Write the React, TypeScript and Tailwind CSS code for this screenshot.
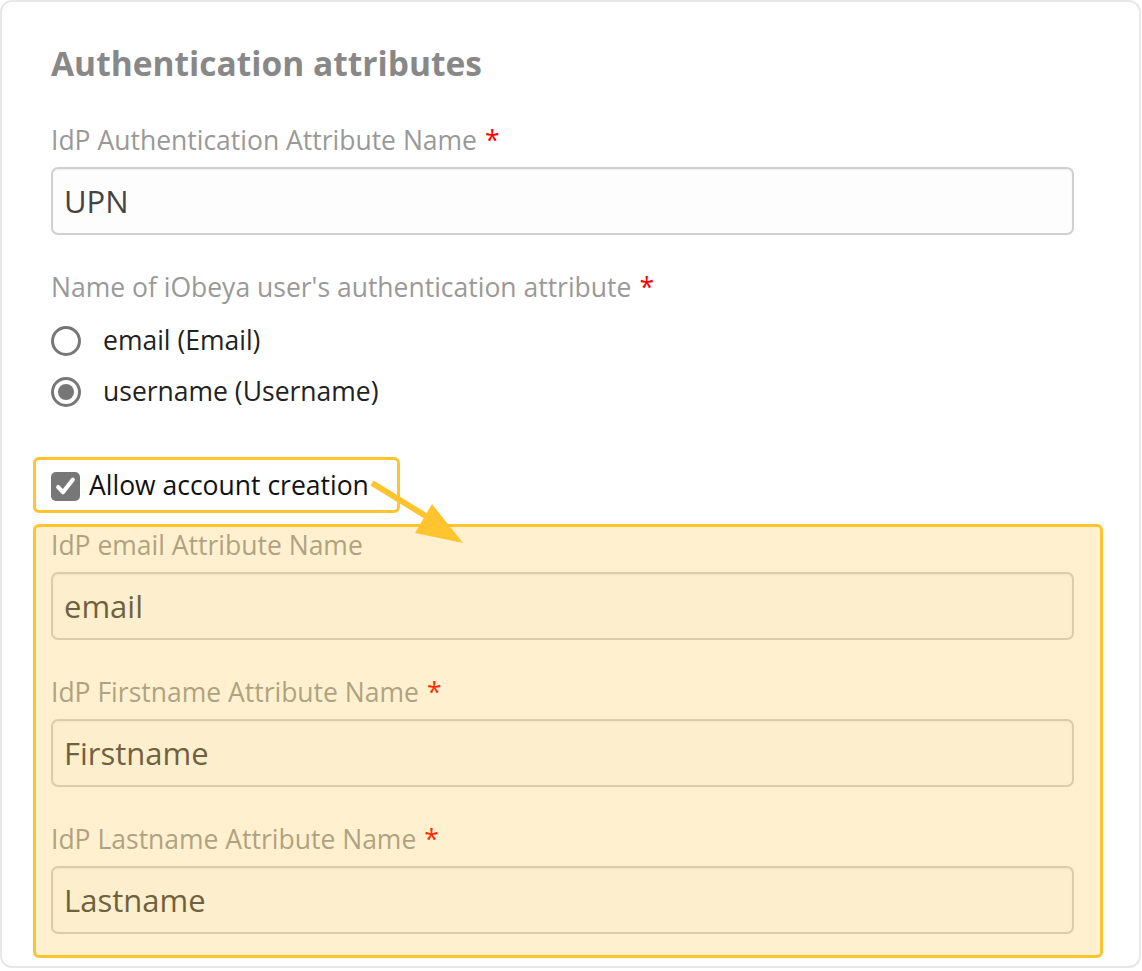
import React from 'react'

const font = { fontFamily: '"Open Sans", "Noto Sans", sans-serif' }

function Label({ text, required }: { text: string; required?: boolean }) {
  return (
    <div className="text-[26.5px] leading-[32px] text-[#999999]">
      {text}
      {required && <span className="ml-2 text-[#ff0000]">*</span>}
    </div>
  )
}

function TextField({ label, value, required }: { label: string; value: string; required?: boolean }) {
  return (
    <div className="flex flex-col">
      <Label text={label} required={required} />
      <div className="mt-[11px] flex h-[68px] items-center rounded-[7px] border-2 border-[#d0d0d0] bg-[#fdfdfd] px-[11px] text-[31px] text-[#444444] shadow-[inset_0_1px_2px_rgba(0,0,0,0.06)]">
        {value}
      </div>
    </div>
  )
}

function Radio({ label, checked }: { label: string; checked?: boolean }) {
  return (
    <div className="flex h-[32px] items-center gap-[22px]">
      <span className="flex h-[30px] w-[30px] items-center justify-center rounded-full border-[3px] border-[#777777] bg-white">
        {checked && <span className="h-[16px] w-[16px] rounded-full bg-[#777777]" />}
      </span>
      <span className="text-[26.5px] text-[#222222]">{label}</span>
    </div>
  )
}

export default function App() {
  return (
    <div className="bg-white" style={font}>
      <div className="relative h-[968px] w-[1141px] rounded-[12px] border-2 border-[#e8e8e8] bg-white pl-[49px] pr-[65px] pt-[41px]">
        <h2 className="text-[33.5px] font-bold leading-[40px] text-[#888888]">Authentication attributes</h2>

        <div className="mt-[41px]">
          <TextField label="IdP Authentication Attribute Name" value="UPN" required />
        </div>

        <div className="mt-[36px]">
          <Label text="Name of iObeya user's authentication attribute" required />
        </div>
        <div className="mt-[22px] flex flex-col gap-[19px]">
          <Radio label="email (Email)" />
          <Radio label="username (Username)" checked />
        </div>

        <div className="mt-[62px] flex h-[32px] items-center gap-[9px]">
          <span className="flex h-[29px] w-[29px] items-center justify-center rounded-[5px] bg-[#777777]">
            <svg viewBox="0 0 24 24" className="h-[25px] w-[25px]" fill="none" stroke="white" strokeWidth="4" strokeLinecap="round" strokeLinejoin="round">
              <path d="M5 12.5l4.5 5L19 5.5" />
            </svg>
          </span>
          <span className="text-[26.5px] text-[#111111]">Allow account creation</span>
        </div>

        <div className="mt-[27px] flex flex-col gap-[36px]">
          <TextField label="IdP email Attribute Name" value="email" />
          <TextField label="IdP Firstname Attribute Name" value="Firstname" required />
          <TextField label="IdP Lastname Attribute Name" value="Lastname" required />
        </div>

        {/* annotation overlays */}
        <div className="pointer-events-none absolute left-[31px] top-[455px] h-[56px] w-[367px] rounded-[6px] border-[3px] border-[#ffc42e]" />
        <div className="pointer-events-none absolute left-[31px] top-[522px] h-[434px] w-[1070px] rounded-[6px] border-[3px] border-[#ffc42e] bg-[#ffc42e]/[0.23]" />
        <svg className="pointer-events-none absolute left-0 top-0" width="1141" height="968" viewBox="0 0 1141 968">
          <line x1="370" y1="481" x2="432" y2="519" stroke="#ffc42e" strokeWidth="6" />
          <polygon points="461,541 413,531 430,502" fill="#ffc42e" />
        </svg>
      </div>
    </div>
  )
}
